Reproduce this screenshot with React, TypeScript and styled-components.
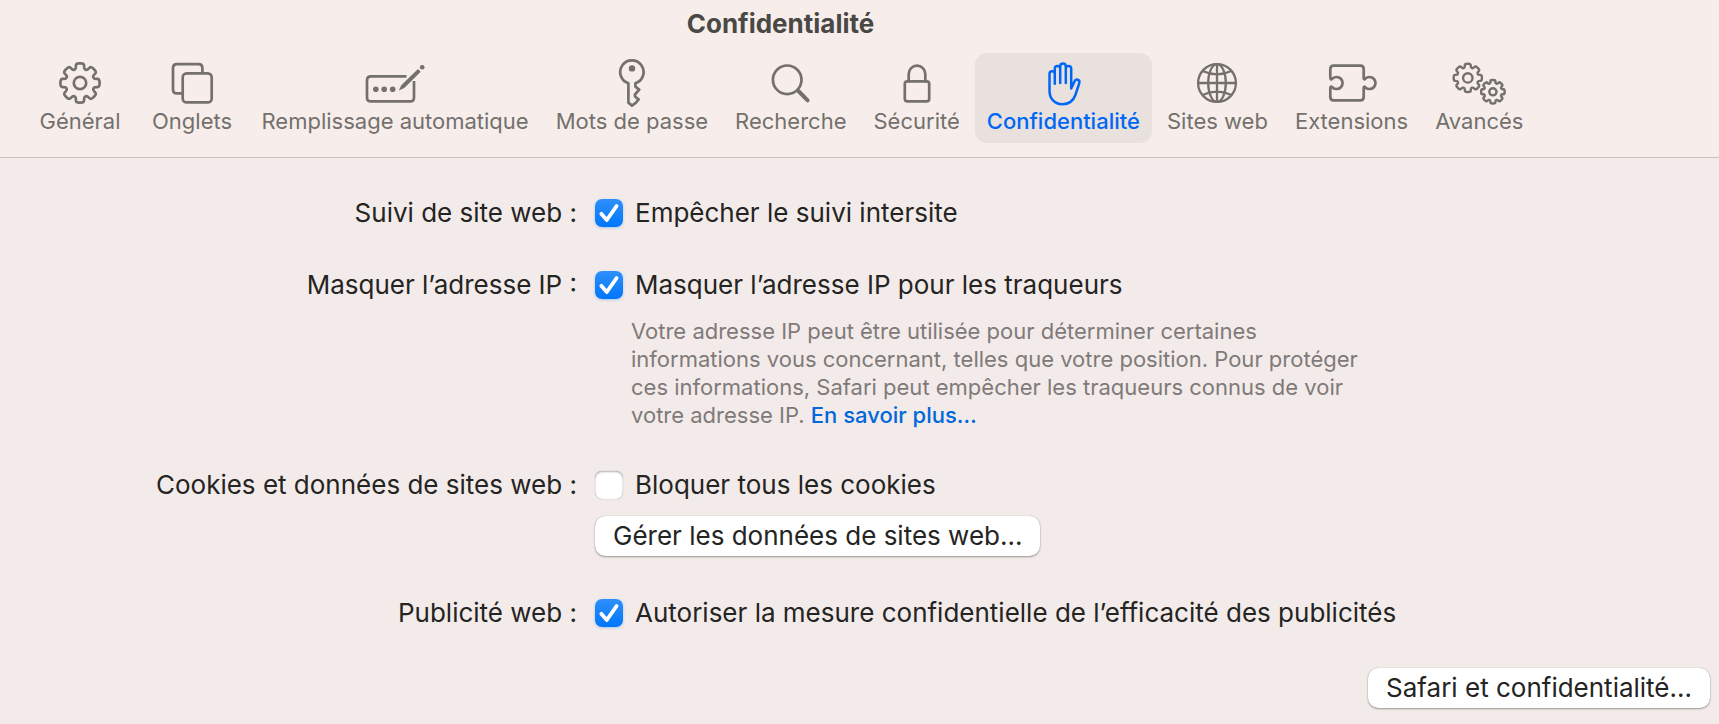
import React, { useState } from "react";
import styled, { createGlobalStyle } from "styled-components";

const GlobalStyle = createGlobalStyle`
  * { box-sizing: border-box; }
  body {
    margin: 0;
    background: #f3ebe9;
    color: #242423;
    font-family: Inter, "Liberation Sans", sans-serif;
  }
  button { font-family: inherit; }
`;

const Window = styled.div`
  display: flex;
  flex-direction: column;
  min-height: 100vh;
`;

const Header = styled.header`
  display: flex;
  flex-direction: column;
  align-items: center;
  gap: 13px;
  padding: 8px 158px 14px 0;
  background: #f7eeeb;
  border-bottom: 1px solid #cbc3c1;
`;

const Title = styled.h1`
  margin: 0;
  font-size: 26px;
  line-height: 32px;
  font-weight: 700;
  color: #4a4845;
`;

const Toolbar = styled.nav`
  display: flex;
  justify-content: center;
  gap: 3px;
`;

const ToolbarItem = styled.button<{ $active: boolean }>`
  display: flex;
  flex-direction: column;
  align-items: center;
  flex: none;
  min-width: 109px;
  padding: 4px 12px 8px;
  border: 0;
  border-radius: 12px;
  background: ${({ $active }) => ($active ? "#e9e1de" : "transparent")};
  color: ${({ $active }) => ($active ? "#0067f4" : "#73706d")};
  font-size: 22px;
  line-height: 28px;
  font-weight: ${({ $active }) => ($active ? 500 : 400)};
  white-space: nowrap;
`;

const Icon = styled.svg`
  display: block;
  width: 60px;
  height: 50px;
  fill: none;
  stroke: currentColor;
  stroke-width: 2.7;
  stroke-linecap: round;
  stroke-linejoin: round;
`;

const Main = styled.main`
  display: flex;
  flex: 1;
  flex-direction: column;
  justify-content: space-between;
  gap: 36px;
  padding: 37px 9px 16px 0;
`;

const Settings = styled.div`
  display: flex;
  flex-direction: column;
  gap: 36px;
`;

const SettingRow = styled.div`
  display: grid;
  grid-template-columns: minmax(0, 577fr) minmax(0, 1115fr);
  column-gap: 18px;
  font-size: 26px;
  line-height: 36px;
`;

const SettingName = styled.div`
  text-align: right;
`;

const SettingBody = styled.div`
  display: flex;
  flex-direction: column;
  align-items: flex-start;
`;

const CheckLabel = styled.label`
  display: flex;
  align-items: center;
  gap: 12px;
`;

const CheckBox = styled.span`
  display: grid;
  flex: none;
  width: 28px;
  height: 28px;
`;

const CheckInput = styled.input`
  grid-area: 1 / 1;
  appearance: none;
  width: 28px;
  height: 28px;
  margin: 0;
  border-radius: 7px;
  background: #ffffff;
  box-shadow: inset 0 1px 2px rgba(0, 0, 0, 0.3), 0 0 1px rgba(0, 0, 0, 0.4);

  &:checked {
    background: linear-gradient(#2e90fb, #0076fb);
    box-shadow: 0 1px 3px rgba(0, 110, 250, 0.3);
  }

  &:not(:checked) + svg {
    visibility: hidden;
  }
`;

const CheckMark = styled.svg`
  grid-area: 1 / 1;
  position: relative;
  width: 28px;
  height: 28px;
  pointer-events: none;
  fill: none;
  stroke: #ffffff;
  stroke-width: 3.8;
  stroke-linecap: round;
  stroke-linejoin: round;
`;

const HelpText = styled.p`
  max-width: 744px;
  margin: 14px 0 2px;
  padding-left: 36px;
  box-sizing: content-box;
  color: #7f7a79;
  font-size: 22px;
  line-height: 28px;
`;

const HelpLink = styled.a`
  color: #0068da;
  font-weight: 500;
  text-decoration: none;
`;

const PushButton = styled.button`
  height: 40px;
  padding: 0 18px;
  border: 0;
  border-radius: 10px;
  background: #ffffff;
  color: #242423;
  font-size: 26px;
  line-height: 36px;
  white-space: nowrap;
  box-shadow: 0 0 1px rgba(0, 0, 0, 0.3), 0 1px 2px rgba(0, 0, 0, 0.35);
`;

const ManageButton = styled(PushButton)`
  margin: 13px 0 3px;
`;

const Footer = styled.footer`
  display: flex;
  justify-content: flex-end;
`;

const gear = (cx: number, cy: number, outer: number, root: number) => {
  const teeth = 8;
  const at = (radius: number, deg: number): [number, number] => {
    const a = (deg * Math.PI) / 180;
    return [cx + radius * Math.cos(a), cy + radius * Math.sin(a)];
  };
  const points: [number, number][] = [];
  for (let i = 0; i < teeth; i++) {
    const mid = (i * 360) / teeth - 90;
    points.push(at(root, mid - 16), at(outer, mid - 12), at(outer, mid + 12), at(root, mid + 16));
  }
  const mix = (a: [number, number], b: [number, number], t: number) =>
    `${(a[0] + (b[0] - a[0]) * t).toFixed(2)} ${(a[1] + (b[1] - a[1]) * t).toFixed(2)}`;
  const n = points.length;
  let d = "";
  points.forEach((p, i) => {
    const prev = points[(i + n - 1) % n];
    const next = points[(i + 1) % n];
    d += `${i ? "L" : "M"}${mix(p, prev, 0.4)}Q${p[0].toFixed(2)} ${p[1].toFixed(2)} ${mix(p, next, 0.4)}`;
  });
  return d + "Z";
};

const tabs: { name: string; icon: React.ReactNode }[] = [
  {
    name: "Général",
    icon: (
      <>
        <path d={gear(0, 0, 20, 14.6)} />
        <circle r="6.2" />
      </>
    ),
  },
  {
    name: "Onglets",
    icon: (
      <>
        <path d="M-10.5 10.4H-15Q-19 10.4-19 6.4V-14.8Q-19-18.8-15-18.8H6.4Q10.4-18.8 10.4-14.8V-10.5" />
        <rect x="-9.3" y="-9.6" width="29" height="29" rx="4" />
      </>
    ),
  },
  {
    name: "Remplissage automatique",
    icon: (
      <>
        <path
          strokeLinecap="butt"
          d="M11.5-6.6H-24Q-28-6.6-28-2.6V14.4Q-28 18.4-24 18.4H15Q19 18.4 19 14.4V-2"
        />
        <g fill="currentColor" stroke="none">
          <circle cx="-19.2" cy="6.3" r="2.8" />
          <circle cx="-10.8" cy="6.3" r="2.8" />
          <circle cx="-2.3" cy="6.3" r="2.8" />
          <path d="M3.8 7.6L6.3 2.2 22.2-13.3Q23-14.1 23.9-13.2L25-12.1Q25.8-11.2 25-10.4L9.3 5.1Z" />
          <circle cx="27.2" cy="-15.8" r="2.3" />
        </g>
      </>
    ),
  },
  {
    name: "Mots de passe",
    icon: (
      <>
        <path d="M-3.6 .2A11.7 11.7 0 1 1 3.4 .2V3.6L7.2 6.6 3 11.5V13.5L6.6 16.4 4 19.6 0 22.6-3.6 19.6Z" />
        <circle cy="-14.6" r="3.2" fill="currentColor" stroke="none" />
      </>
    ),
  },
  {
    name: "Recherche",
    icon: (
      <>
        <circle cx="-3.8" cy="-3.2" r="14.3" />
        <path strokeWidth="4" d="M7.4 8L16.6 17.4" />
      </>
    ),
  },
  {
    name: "Sécurité",
    icon: (
      <>
        <rect x="-12.2" y="-1.6" width="24.4" height="20" rx="2.6" />
        <path d="M-8.3-1.6V-9A8.3 8.3 0 0 1 8.3-9V-1.6" />
      </>
    ),
  },
  {
    name: "Confidentialité",
    icon: (
      <path
        strokeWidth="2.5"
        d="M-8.2 .8V-14.3A2.7 2.7 0 0 1-2.8-14.3V0V-16.6A2.8 2.8 0 0 1 2.8-16.6V0V-14.3A2.7 2.7 0 0 1 8.2-14.3V5.4L11.4-1.4C12.8-4.8 17.4-3.6 16.2 .4L12.4 12C10 18.6 5.6 21.2-.6 21.2C-8.4 21.2-13.5 15.6-13.5 7.4V-9A2.65 2.65 0 0 1-8.2-9"
      />
    ),
  },
  {
    name: "Sites web",
    icon: (
      <g strokeWidth="2.3">
        <circle r="18.9" />
        <ellipse rx="8.8" ry="18.9" />
        <path d="M0-18.9V18.9M-18.9 0H18.9M-14.4-12Q0-5.4 14.4-12M-14.4 12Q0 5.4 14.4 12" />
      </g>
    ),
  },
  {
    name: "Extensions",
    icon: (
      <path d="M11.7-14V-5Q11.7-2.6 13.4-4.4A6 6 0 1 1 13.4 4.4Q11.7 2.6 11.7 5V14Q11.7 17.4 8.3 17.4H-18.3Q-21.7 17.4-21.7 14V5.4Q-21.7 2.6-19.5 4.4A6 6 0 1 0-19.5-4.4Q-21.7-2.6-21.7-5.4V-14Q-21.7-17.4-18.3-17.4H8.3Q11.7-17.4 11.7-14Z" />
    ),
  },
  {
    name: "Avancés",
    icon: (
      <g strokeWidth="2.4">
        <path d={gear(-11.2, -5.1, 14.4, 10.8)} />
        <circle cx="-11.2" cy="-5.1" r="4.7" />
        <path d={gear(13.9, 8.8, 12, 9)} />
        <circle cx="13.9" cy="8.8" r="3.6" />
      </g>
    ),
  },
];

function Checkbox({ label, defaultChecked }: { label: string; defaultChecked?: boolean }) {
  return (
    <CheckLabel>
      <CheckBox>
        <CheckInput type="checkbox" defaultChecked={defaultChecked} />
        <CheckMark viewBox="0 0 28 28" aria-hidden="true">
          <path d="M6.3 14.8L11.8 21 21.6 7" />
        </CheckMark>
      </CheckBox>
      {label}
    </CheckLabel>
  );
}

export default function App() {
  const [active, setActive] = useState("Confidentialité");
  return (
    <Window>
      <GlobalStyle />
      <Header>
        <Title>{active}</Title>
        <Toolbar>
          {tabs.map(({ name, icon }) => (
            <ToolbarItem
              key={name}
              type="button"
              $active={name === active}
              aria-pressed={name === active}
              onClick={() => setActive(name)}
            >
              <Icon viewBox="-30 -26 60 50" aria-hidden="true">
                {icon}
              </Icon>
              {name}
            </ToolbarItem>
          ))}
        </Toolbar>
      </Header>
      <Main>
        <Settings>
          <SettingRow>
            <SettingName>Suivi de site web :</SettingName>
            <SettingBody>
              <Checkbox label="Empêcher le suivi intersite" defaultChecked />
            </SettingBody>
          </SettingRow>
          <SettingRow>
            <SettingName>Masquer l’adresse IP :</SettingName>
            <SettingBody>
              <Checkbox label="Masquer l’adresse IP pour les traqueurs" defaultChecked />
              <HelpText>
                Votre adresse IP peut être utilisée pour déterminer certaines informations vous
                concernant, telles que votre position. Pour protéger ces informations, Safari peut
                empêcher les traqueurs connus de voir votre adresse IP.{" "}
                <HelpLink href="#en-savoir-plus">En savoir plus…</HelpLink>
              </HelpText>
            </SettingBody>
          </SettingRow>
          <SettingRow>
            <SettingName>Cookies et données de sites web :</SettingName>
            <SettingBody>
              <Checkbox label="Bloquer tous les cookies" />
              <ManageButton type="button">Gérer les données de sites web…</ManageButton>
            </SettingBody>
          </SettingRow>
          <SettingRow>
            <SettingName>Publicité web :</SettingName>
            <SettingBody>
              <Checkbox
                label="Autoriser la mesure confidentielle de l’efficacité des publicités"
                defaultChecked
              />
            </SettingBody>
          </SettingRow>
        </Settings>
        <Footer>
          <PushButton type="button">Safari et confidentialité…</PushButton>
        </Footer>
      </Main>
    </Window>
  );
}
